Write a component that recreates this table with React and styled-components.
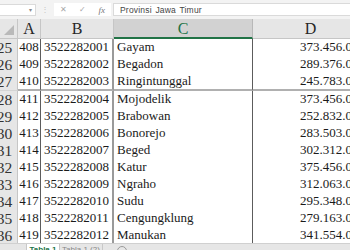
import React from "react";
import styled, { createGlobalStyle } from "styled-components";

const Global = createGlobalStyle`
    html, body {
        margin: 0;
        padding: 0;
        background: #ffffff;
        overflow: hidden;
    }
`

const COLS = "26px 23px 73px 139px 116px";

const Screen = styled.div`
    width: 350px;
    height: 250px;
    overflow: hidden;
    display: flex;
    flex-direction: column;
    background: #f3f3f3;
`

const FormulaBar = styled.div`
    height: 19px;
    flex: none;
    display: flex;
    align-items: center;
    background: #f3f3f3;
    font-family: "Liberation Sans", Arial, sans-serif;
`

const NameBox = styled.div`
    width: 37px;
    height: 12px;
    margin-left: -1px;
    background: #fff;
    border: 1px solid #dadada;
    display: flex;
    align-items: center;
    justify-content: flex-end;
    padding-right: 3px;
    box-sizing: border-box;
    color: #8a8a8a;
    font-size: 6px;
`

const Grip = styled.div`
    width: 18px;
    text-align: center;
    color: #c4c4c4;
    font-size: 8px;
`

const FxBox = styled.div`
    width: 57px;
    height: 13px;
    background: #fff;
    display: flex;
    align-items: center;
    justify-content: space-around;
    color: #a8a8a8;
    font-size: 8px;
`

const Fx = styled.span`
    font-family: "Liberation Serif", serif;
    font-style: italic;
    font-size: 9px;
    color: #777;
`

const FormulaInput = styled.div`
    flex: 1;
    height: 13px;
    margin-left: 2px;
    background: #fff;
    border: 1px solid #dadada;
    border-right: none;
    box-sizing: border-box;
    display: flex;
    align-items: center;
    padding-left: 6px;
    font-size: 8.5px;
    color: #444;
    letter-spacing: 0.2px;
    word-spacing: 1px;
`

const Sheet = styled.div`
    flex: 1;
    overflow: hidden;
    background: #fff;
`

const Grid = styled.div`
    margin-left: -8px;
    font-family: "Liberation Serif", "Times New Roman", serif;
`

const Row = styled.div`
    display: grid;
    grid-template-columns: ${COLS};
    height: ${p => p.h}px;
`

const HeadCell = styled.div`
    background: ${p => (p.active ? "#d2d2d2" : "#e6e6e6")};
    color: ${p => (p.active ? "#217346" : "#262626")};
    border-right: 1px solid ${p => (p.active ? "#b8b8b8" : "#c6c6c6")};
    border-bottom: ${p => (p.active ? "2px solid #217346" : "1px solid #c6c6c6")};
    box-sizing: border-box;
    font-size: 16px;
    line-height: 20px;
    text-align: center;
    overflow: hidden;
`

const RowNum = styled.div`
    background: #e6e6e6;
    color: #333;
    border-right: 1px solid #c6c6c6;
    border-bottom: 1px solid #d4d4d4;
    box-sizing: border-box;
    font-size: 15.5px;
    line-height: 17px;
    text-align: center;
`

const Corner = styled.div`
    background: #e6e6e6;
    border-right: 1px solid #c6c6c6;
    border-bottom: 1px solid #c6c6c6;
    box-sizing: border-box;
    position: relative;
    &::after {
        content: "";
        position: absolute;
        right: 3px;
        bottom: 3px;
        border-left: 10px solid transparent;
        border-bottom: 10px solid #b9b9b9;
    }
`

const Cell = styled.div`
    background: #fff;
    color: #1a1a1a;
    border-right: ${p => p.edge || "1px solid #5c5c5c"};
    border-bottom: ${p => (p.thick ? "2px solid #b0b0b0" : "1px solid #5c5c5c")};
    box-sizing: border-box;
    font-size: 13px;
    line-height: 16px;
    padding: ${p => (p.align === "center" ? "0" : "0 3px")};
    text-align: ${p => p.align || "left"};
    white-space: nowrap;
    overflow: hidden;
`

const TabBar = styled.div`
    height: 6px;
    flex: none;
    display: flex;
    align-items: flex-start;
    background: #e6e6e6;
    border-top: 1px solid #d0d0d0;
    font-family: "Liberation Sans", Arial, sans-serif;
    font-size: 8px;
    overflow: hidden;
`

const Tab = styled.div`
    width: ${p => p.w}px;
    height: 10px;
    background: ${p => (p.active ? "#fff" : "transparent")};
    color: ${p => (p.active ? "#217346" : "#888")};
    font-weight: ${p => (p.active ? 700 : 400)};
    border-right: 1px solid #c8c8c8;
    text-align: center;
    line-height: 12px;
`

const AddSheet = styled.div`
    margin-left: 14px;
    margin-top: 2px;
    width: 8px;
    height: 8px;
    border: 1px solid #9a9a9a;
    border-radius: 50%;
`

const rows = [
    [25, 408, "3522282001", "Gayam", "373.456.000"],
    [26, 409, "3522282002", "Begadon", "289.376.000"],
    [27, 410, "3522282003", "Ringintunggal", "245.783.000"],
    [28, 411, "3522282004", "Mojodelik", "373.456.000"],
    [29, 412, "3522282005", "Brabowan", "252.832.000"],
    [30, 413, "3522282006", "Bonorejo", "283.503.000"],
    [31, 414, "3522282007", "Beged", "302.312.000"],
    [32, 415, "3522282008", "Katur", "375.456.000"],
    [33, 416, "3522282009", "Ngraho", "312.063.000"],
    [34, 417, "3522282010", "Sudu", "295.348.000"],
    [35, 418, "3522282011", "Cengungklung", "279.163.000"],
    [36, 419, "3522282012", "Manukan", "341.554.000"],
];

function App() {
    return (
        <Screen>
            <Global />
            <FormulaBar>
                <NameBox>▾</NameBox>
                <Grip>⋮</Grip>
                <FxBox>
                    <span>✕</span>
                    <span>✓</span>
                    <Fx>fx</Fx>
                </FxBox>
                <FormulaInput>Provinsi Jawa Timur</FormulaInput>
            </FormulaBar>
            <Sheet>
                <Grid>
                    <Row h={20}>
                        <Corner />
                        <HeadCell>A</HeadCell>
                        <HeadCell>B</HeadCell>
                        <HeadCell active>C</HeadCell>
                        <HeadCell>D</HeadCell>
                    </Row>
                    {rows.map(([n, a, b, c, d]) => (
                        <Row key={n} h={n === 27 ? 18 : 17}>
                            <RowNum>{n}</RowNum>
                            <Cell align="center" thick={n === 27}>{a}</Cell>
                            <Cell align="center" thick={n === 27} edge="2px solid #9a9a9a">{b}</Cell>
                            <Cell thick={n === 27}>{c}</Cell>
                            <Cell align="right" thick={n === 27}>{d}</Cell>
                        </Row>
                    ))}
                </Grid>
            </Sheet>
            <TabBar>
                <Tab w={26} />
                <Tab w={32} active>Tabla 1</Tab>
                <Tab w={42}>Tabla 1 (2)</Tab>
                <AddSheet />
            </TabBar>
        </Screen>
    );
}

export default App;
